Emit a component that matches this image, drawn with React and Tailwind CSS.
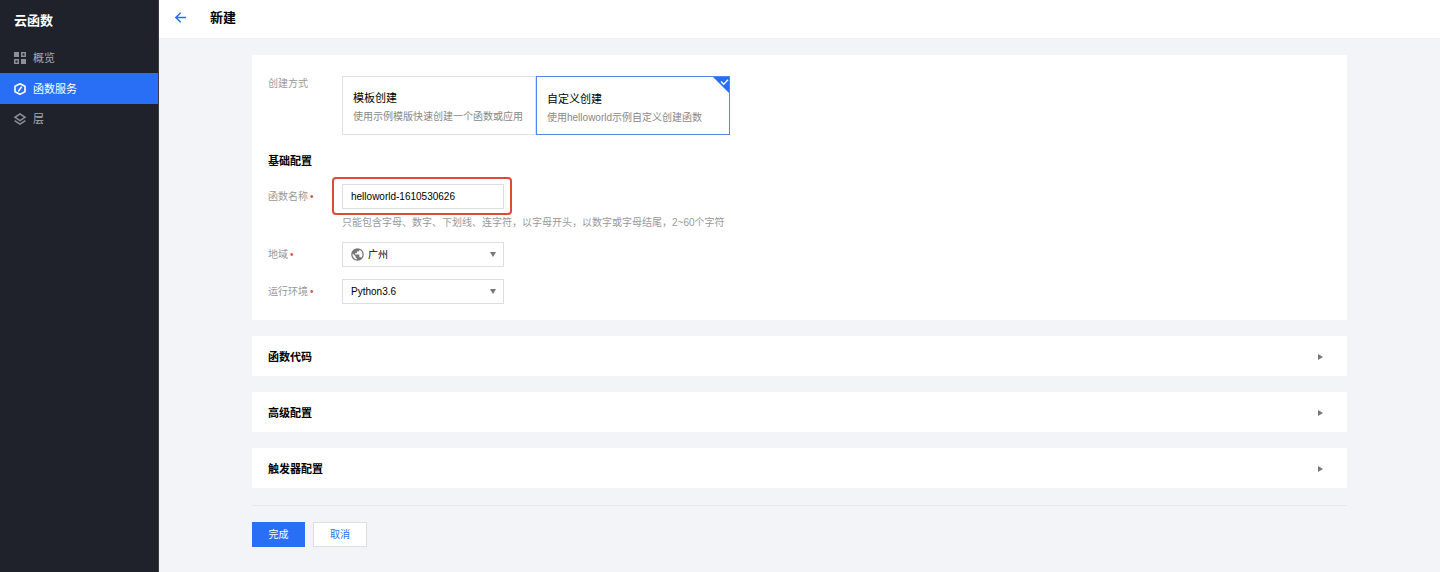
import { useState } from "react";
import { MdPublic } from "react-icons/md";

const OverviewIcon = () => (
  <svg className="w-3 h-3" viewBox="0 0 12 12" fill="currentColor">
    <path d="M0 0h5v5H0zM7 7h5v5H7z" />
    <path
      fillRule="evenodd"
      d="M7 0h5v5H7zM8.5 1.5v2h2v-2zM0 7h5v5H0zM1.5 8.5v2h2v-2z"
    />
  </svg>
);

const FunctionIcon = () => (
  <svg
    className="w-3 h-3"
    viewBox="0 0 12 12"
    fill="none"
    stroke="currentColor"
    strokeWidth="1.6"
  >
    <path d="M6 .8 11 3.2v5.6L6 11.2 1 8.8V3.2z" strokeLinejoin="round" />
    <path d="M7.7 3.6 4.3 8.4" />
  </svg>
);

const LayerIcon = () => (
  <svg
    className="w-3 h-3"
    viewBox="0 0 12 12"
    fill="none"
    stroke="currentColor"
    strokeWidth="1.5"
  >
    <path d="M6 .9 11 4.3 6 7.7 1 4.3z" />
    <path d="M.6 7.6 6 11.1l5.4-3.5" />
  </svg>
);

const menu = [
  { name: "概览", icon: OverviewIcon },
  { name: "函数服务", icon: FunctionIcon, active: true },
  { name: "层", icon: LayerIcon },
];

const methods = [
  { id: "template", title: "模板创建", desc: "使用示例模版快速创建一个函数或应用" },
  { id: "custom", title: "自定义创建", desc: "使用helloworld示例自定义创建函数" },
];

const sections = ["函数代码", "高级配置", "触发器配置"];

const Required = () => <span className="ml-0.5 text-[#d9534f]">•</span>;

const DownArrow = () => (
  <svg
    className="absolute right-2 top-[10px] w-[6px] h-[5px] text-[#777] pointer-events-none"
    viewBox="0 0 6 5"
    fill="currentColor"
  >
    <path d="M0 0h6L3 5z" />
  </svg>
);

const App = () => {
  const [method, setMethod] = useState("custom");
  const [name, setName] = useState("helloworld-1610530626");
  const [region, setRegion] = useState("广州");
  const [runtime, setRuntime] = useState("Python3.6");

  return (
    <div className="flex min-h-screen bg-[#f2f4f8] text-[10px] leading-4 text-black font-['Liberation_Sans','Noto_Sans_CJK_SC',sans-serif]">
      <aside className="w-[159px] shrink-0 bg-[#1f212b] border-r border-[#3a3c46]">
        <h2 className="px-3.5 pt-[13px] pb-3.5 text-[13px] leading-4 font-bold text-white">
          云函数
        </h2>
        <nav>
          {menu.map(({ name, icon: Icon, active }) => (
            <a
              key={name}
              href="#"
              className={
                active
                  ? "flex items-center gap-[7px] h-[31px] px-3.5 text-[11px] text-white bg-[#296ff6]"
                  : "flex items-center gap-[7px] h-[30px] px-3.5 text-[11px] text-[#8e9098]"
              }
            >
              <Icon />
              <span className={active ? "text-white" : "text-[#a8aab0]"}>{name}</span>
            </a>
          ))}
        </nav>
      </aside>

      <div className="flex-1 min-w-0">
        <header className="flex items-center gap-6 h-[39px] pb-[3px] px-4 bg-white border-b border-[#eef0f4]">
          <a href="#" aria-label="返回" className="text-[#296ff6]">
            <svg
              className="w-[11px] h-[11px]"
              viewBox="0 0 11 11"
              fill="none"
              stroke="currentColor"
              strokeWidth="1.5"
            >
              <path d="M5.7.7.9 5.5l4.8 4.8M1 5.5h10" />
            </svg>
          </a>
          <h1 className="text-[13px] font-bold">新建</h1>
        </header>

        <main className="mx-[93px] pt-4 pb-6">
          <form onSubmit={(e) => e.preventDefault()}>
            <section className="px-4 pt-[21px] pb-4 bg-white">
              <div className="flex" role="radiogroup" aria-label="创建方式">
                <span className="w-[74px] shrink-0 text-[#999]">创建方式</span>
                <div className="flex">
                  {methods.map((item) => (
                    <label
                      key={item.id}
                      className={
                        method === item.id
                          ? "relative w-[194px] h-[59px] px-2.5 pt-3.5 border border-[#4f86f0] cursor-pointer"
                          : "relative w-[194px] h-[59px] px-2.5 pt-[13px] border border-[#dfe1e6] cursor-pointer"
                      }
                    >
                      <input
                        type="radio"
                        name="method"
                        className="sr-only"
                        checked={method === item.id}
                        onChange={() => setMethod(item.id)}
                      />
                      <span className="block text-[11px]">{item.title}</span>
                      <span className="block mt-[3px] whitespace-nowrap text-[#888]">
                        {item.desc}
                      </span>
                      {method === item.id && (
                        <svg
                          className="absolute top-0 right-0 w-4 h-4"
                          viewBox="0 0 16 16"
                          fill="none"
                        >
                          <path d="M0 0h16v16z" fill="#296ff6" />
                          <path d="m8 4.5 2.7 2.7L15 2.7" stroke="#fff" strokeWidth="1.3" />
                        </svg>
                      )}
                    </label>
                  ))}
                </div>
              </div>

              <h3 className="mt-[18px] text-[11px] font-bold">基础配置</h3>

              <div className="flex mt-[15px]">
                <label htmlFor="name" className="w-[74px] shrink-0 pt-[5px] text-[#999]">
                  函数名称
                  <Required />
                </label>
                <div>
                  <div className="relative w-[162px]">
                    <input
                      id="name"
                      type="text"
                      className="block w-full h-[25px] px-2 bg-white border border-[#dcdee3] outline-none"
                      value={name}
                      onChange={(e) => setName(e.target.value)}
                    />
                    <span className="absolute -top-[7px] -bottom-[6px] -left-[10px] -right-[8px] border-2 border-[#de4a33] rounded-[4px] pointer-events-none" />
                  </div>
                  <p className="mt-1.5 text-[#999]">
                    只能包含字母、数字、下划线、连字符，以字母开头，以数字或字母结尾，2~60个字符
                  </p>
                </div>
              </div>

              <div className="flex mt-[11px]">
                <label htmlFor="region" className="w-[74px] shrink-0 pt-[5px] text-[#999]">
                  地域
                  <Required />
                </label>
                <div className="relative w-[162px]">
                  <select
                    id="region"
                    className="block w-full h-[25px] pl-[25px] bg-white border border-[#dcdee3] appearance-none"
                    value={region}
                    onChange={(e) => setRegion(e.target.value)}
                  >
                    <option>广州</option>
                  </select>
                  <MdPublic className="absolute left-2 top-[5px] w-[15px] h-[15px] text-[#777] pointer-events-none" />
                  <DownArrow />
                </div>
              </div>

              <div className="flex mt-3">
                <label htmlFor="runtime" className="w-[74px] shrink-0 pt-[5px] text-[#999]">
                  运行环境
                  <Required />
                </label>
                <div className="relative w-[162px]">
                  <select
                    id="runtime"
                    className="block w-full h-[25px] pl-2 bg-white border border-[#dcdee3] appearance-none"
                    value={runtime}
                    onChange={(e) => setRuntime(e.target.value)}
                  >
                    <option>Python3.6</option>
                  </select>
                  <DownArrow />
                </div>
              </div>
            </section>

            {sections.map((title) => (
              <section key={title} className="mt-4 bg-white">
                <button
                  type="button"
                  className="flex items-center justify-between w-full h-10 pt-0.5 pl-4 pr-6 text-[11px] font-bold cursor-pointer"
                >
                  {title}
                  <svg
                    className="w-[5px] h-[6px] text-[#777]"
                    viewBox="0 0 5 6"
                    fill="currentColor"
                  >
                    <path d="M0 0v6l5-3z" />
                  </svg>
                </button>
              </section>
            ))}

            <div className="flex gap-2 mt-[17px] pt-4 border-t border-[#e6e8ec]">
              <button
                type="submit"
                className="w-[53px] h-[25px] pt-px text-white bg-[#296ff6] cursor-pointer"
              >
                完成
              </button>
              <button
                type="button"
                className="w-[54px] h-[25px] pt-px text-[#296ff6] bg-white border border-[#dcdee3] cursor-pointer"
              >
                取消
              </button>
            </div>
          </form>
        </main>
      </div>
    </div>
  );
};

export default App;
